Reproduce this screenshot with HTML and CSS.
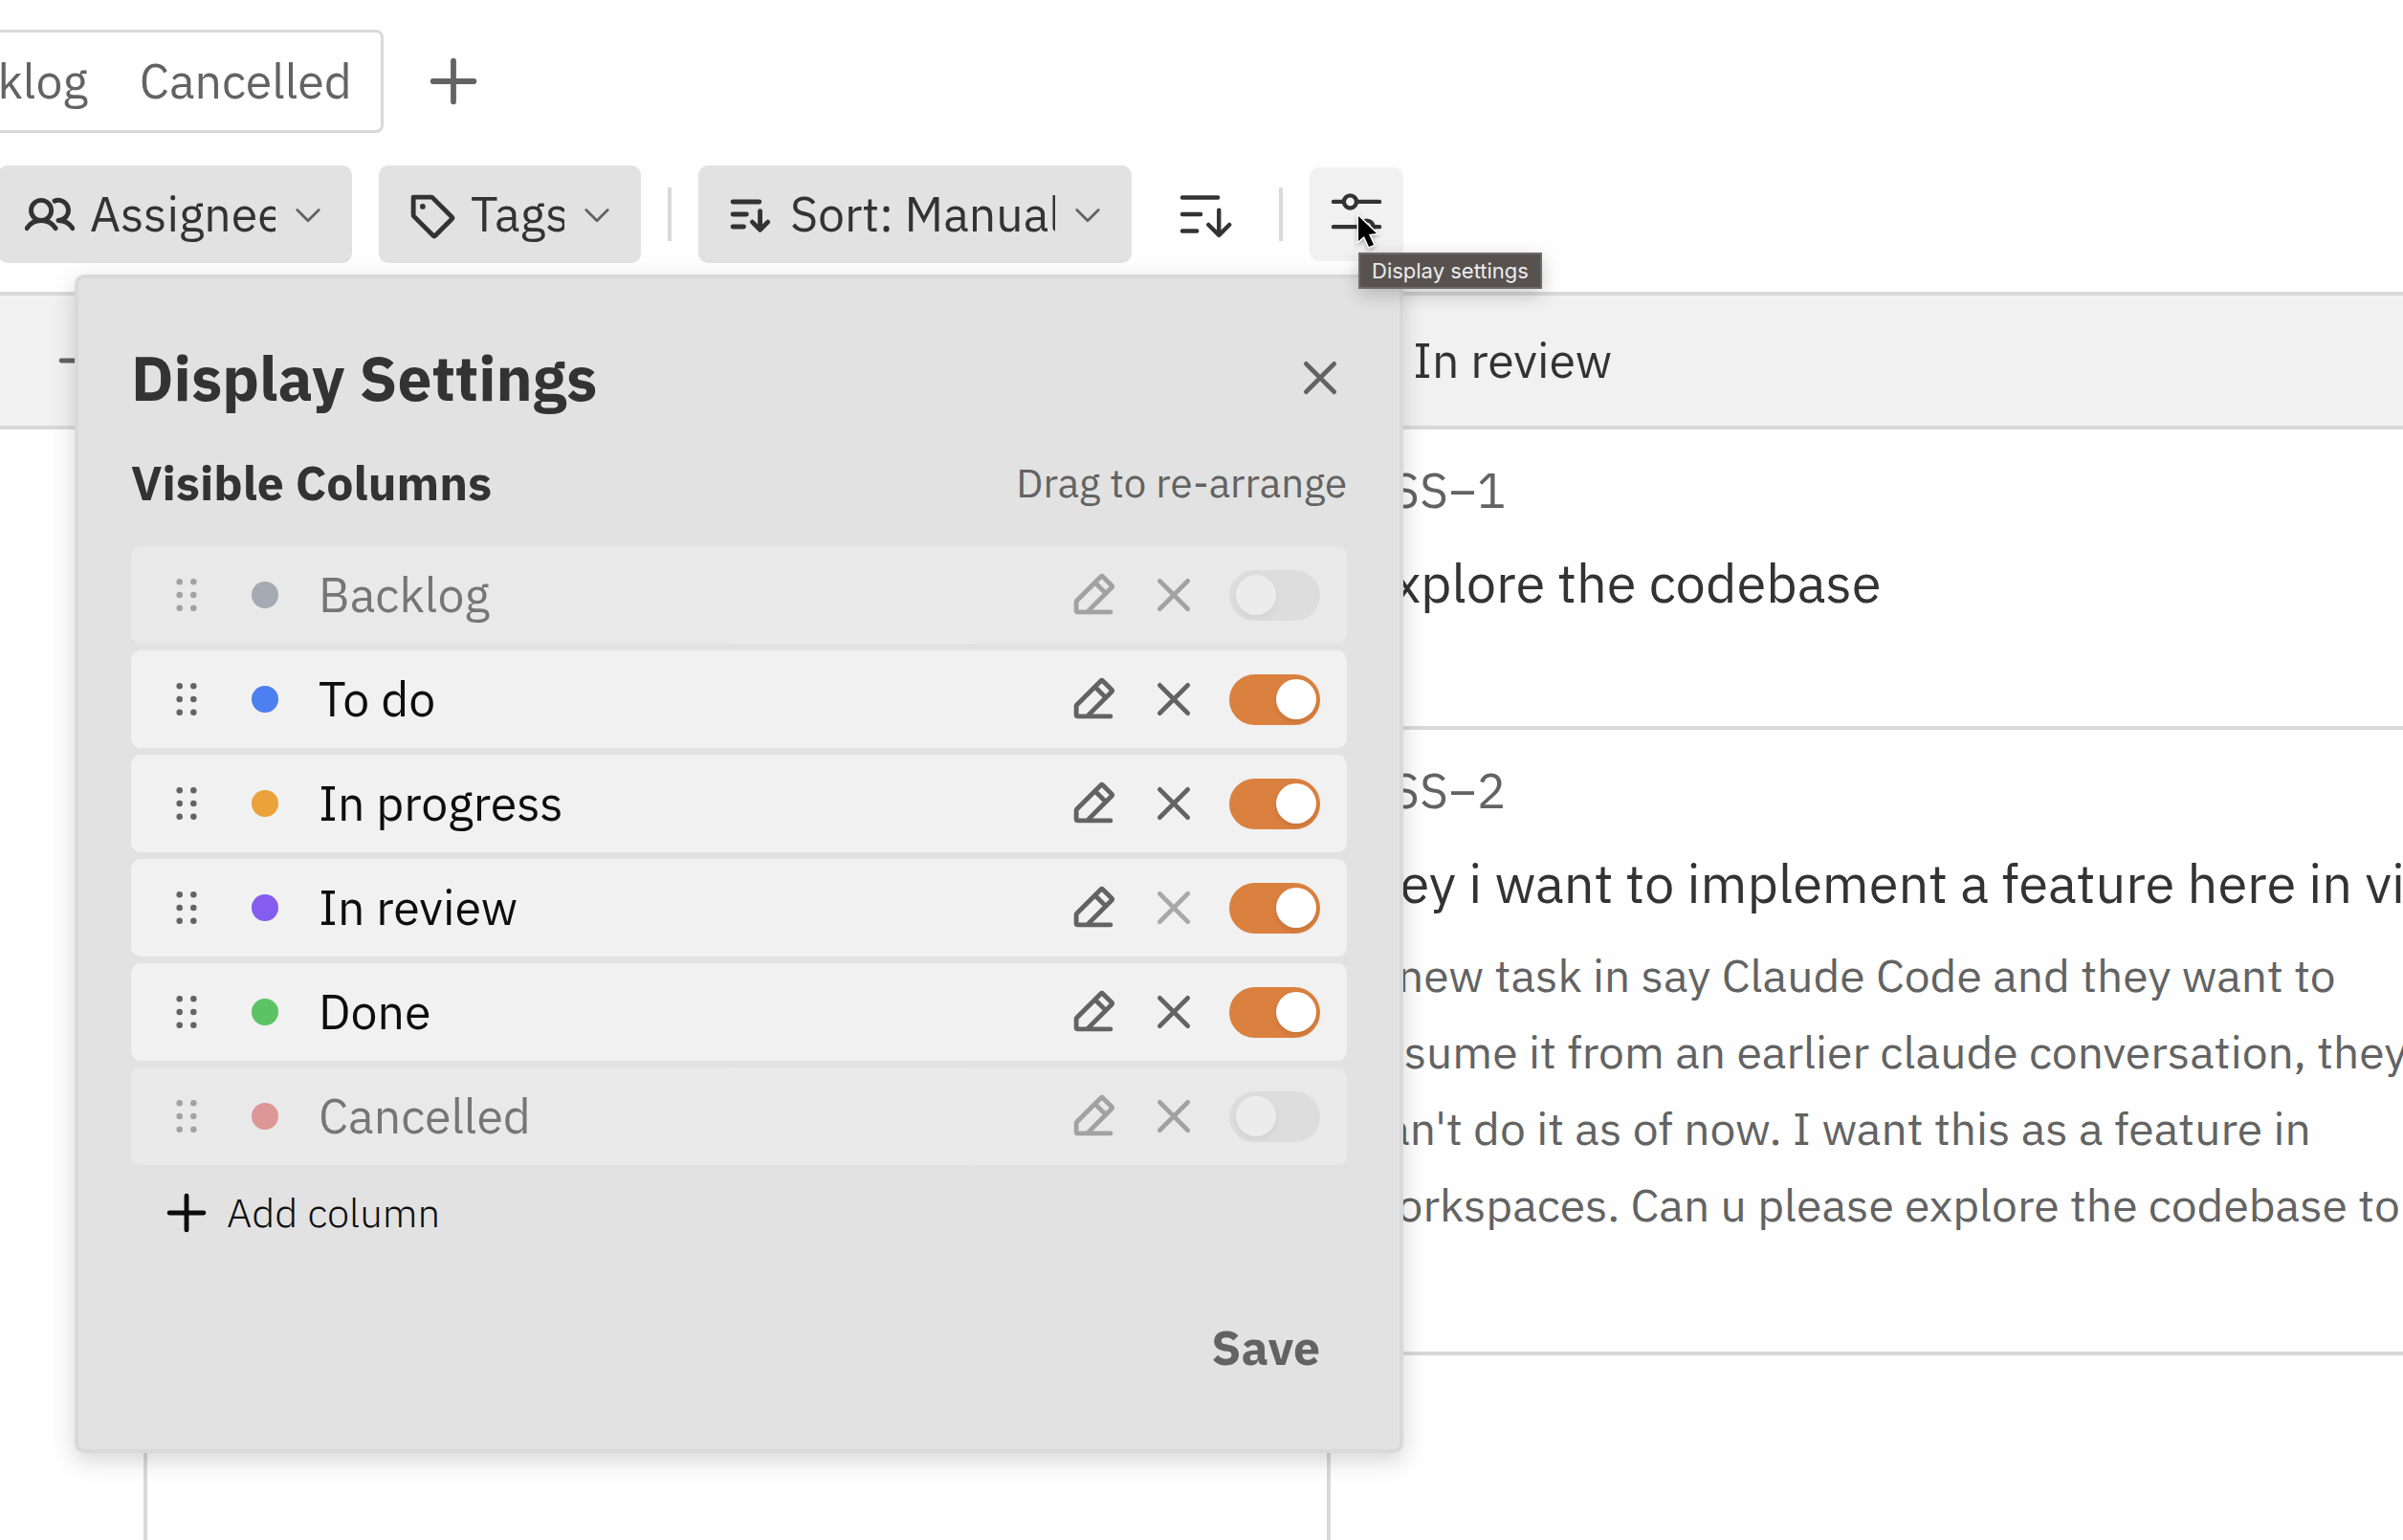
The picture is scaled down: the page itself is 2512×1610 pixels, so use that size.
FILE: index.html
```html
<!DOCTYPE html>
<html lang="en">
<head>
    <meta charset="UTF-8">
    <meta name="viewport" content="width=device-width, initial-scale=1.0">
    <title>Board</title>
    <link rel="stylesheet" href="styles.css">
</head>
<body>
    <!-- icon set -->
    <svg class="sprite" aria-hidden="true">
        <symbol id="plus" viewBox="0 0 256 256"><path d="M40 128H216M128 40V216"/></symbol>
        <symbol id="x" viewBox="0 0 256 256"><path d="M200 56L56 200M200 200L56 56"/></symbol>
        <symbol id="caret" viewBox="0 0 256 256"><path d="M208 96L128 176L48 96"/></symbol>
        <symbol id="users" viewBox="0 0 256 256">
            <circle cx="84" cy="108" r="52"/>
            <path d="M10.23 200a88 88 0 0 1 147.54 0M172 160a87.93 87.93 0 0 1 73.77 40M152.69 59.7A52 52 0 1 1 172 160"/>
        </symbol>
        <symbol id="tag" viewBox="0 0 256 256">
            <path d="M42.34 138.34A8 8 0 0 1 40 132.69V40h92.69a8 8 0 0 1 5.65 2.34l99.32 99.32a8 8 0 0 1 0 11.31L153 237.66a8 8 0 0 1-11.31 0Z"/>
            <circle cx="88" cy="88" r="14" fill="currentColor" stroke="none"/>
        </symbol>
        <symbol id="sort" viewBox="0 0 256 256"><path d="M40 64H176M40 128H110M40 192H96M140 168L180 208L220 168M180 112V208"/></symbol>
        <symbol id="sliders" viewBox="0 0 256 256">
            <path d="M40 80H80M128 80H216M40 176H144M192 176H216"/>
            <circle cx="104" cy="80" r="24"/>
            <circle cx="168" cy="176" r="24"/>
        </symbol>
        <symbol id="pencil" viewBox="0 0 256 256">
            <path d="M96 216H48a8 8 0 0 1-8-8V163.31a8 8 0 0 1 2.34-5.65L165.66 34.34a8 8 0 0 1 11.31 0L221.66 79a8 8 0 0 1 0 11.31ZM216 216H96M136 64L192 120"/>
        </symbol>
        <symbol id="dots" viewBox="0 0 256 256">
            <g fill="currentColor" stroke="none">
                <circle cx="92" cy="60" r="16"/><circle cx="164" cy="60" r="16"/>
                <circle cx="92" cy="128" r="16"/><circle cx="164" cy="128" r="16"/>
                <circle cx="92" cy="196" r="16"/><circle cx="164" cy="196" r="16"/>
            </g>
        </symbol>
    </svg>

    <nav class="views">
        <div class="tabs">
            <a href="#backlog">Backlog</a>
            <a href="#cancelled">Cancelled</a>
        </div>
        <button class="add-view" aria-label="Add view"><svg class="icon large"><use href="#plus"/></svg></button>
    </nav>

    <div class="toolbar">
        <div class="filter assignee">
            <svg class="icon"><use href="#users"/></svg>
            <select aria-label="Assignee"><option>Assignee</option></select>
            <svg class="icon caret"><use href="#caret"/></svg>
        </div>
        <div class="filter tags">
            <svg class="icon"><use href="#tag"/></svg>
            <select aria-label="Tags"><option>Tags</option></select>
            <svg class="icon caret"><use href="#caret"/></svg>
        </div>
        <span class="divider"></span>
        <div class="filter sort">
            <svg class="icon"><use href="#sort"/></svg>
            <select aria-label="Sort"><option>Sort: Manual</option></select>
            <svg class="icon caret"><use href="#caret"/></svg>
        </div>
        <button class="tool" aria-label="Sort direction"><svg class="icon thin"><use href="#sort"/></svg></button>
        <span class="divider"></span>

        <div class="display">
            <button class="tool active" aria-label="Display settings"><svg class="icon thin"><use href="#sliders"/></svg></button>

            <section class="panel">
                <header class="panel-head">
                    <h1>Display Settings</h1>
                    <button class="close" aria-label="Close"><svg class="icon"><use href="#x"/></svg></button>
                </header>
                <div class="panel-sub">
                    <h2>Visible Columns</h2>
                    <span>Drag to re-arrange</span>
                </div>
                <ul class="columns">
                    <li class="off">
                        <svg class="icon"><use href="#dots"/></svg>
                        <span class="dot gray"></span>
                        <label for="c1">Backlog</label>
                        <button aria-label="Edit"><svg class="icon"><use href="#pencil"/></svg></button>
                        <button aria-label="Delete"><svg class="icon"><use href="#x"/></svg></button>
                        <input type="checkbox" id="c1">
                    </li>
                    <li>
                        <svg class="icon"><use href="#dots"/></svg>
                        <span class="dot blue"></span>
                        <label for="c2">To do</label>
                        <button aria-label="Edit"><svg class="icon"><use href="#pencil"/></svg></button>
                        <button aria-label="Delete"><svg class="icon"><use href="#x"/></svg></button>
                        <input type="checkbox" id="c2" checked>
                    </li>
                    <li>
                        <svg class="icon"><use href="#dots"/></svg>
                        <span class="dot amber"></span>
                        <label for="c3">In progress</label>
                        <button aria-label="Edit"><svg class="icon"><use href="#pencil"/></svg></button>
                        <button aria-label="Delete"><svg class="icon"><use href="#x"/></svg></button>
                        <input type="checkbox" id="c3" checked>
                    </li>
                    <li>
                        <svg class="icon"><use href="#dots"/></svg>
                        <span class="dot violet"></span>
                        <label for="c4">In review</label>
                        <button aria-label="Edit"><svg class="icon"><use href="#pencil"/></svg></button>
                        <button aria-label="Delete" disabled><svg class="icon"><use href="#x"/></svg></button>
                        <input type="checkbox" id="c4" checked>
                    </li>
                    <li>
                        <svg class="icon"><use href="#dots"/></svg>
                        <span class="dot green"></span>
                        <label for="c5">Done</label>
                        <button aria-label="Edit"><svg class="icon"><use href="#pencil"/></svg></button>
                        <button aria-label="Delete"><svg class="icon"><use href="#x"/></svg></button>
                        <input type="checkbox" id="c5" checked>
                    </li>
                    <li class="off">
                        <svg class="icon"><use href="#dots"/></svg>
                        <span class="dot red"></span>
                        <label for="c6">Cancelled</label>
                        <button aria-label="Edit"><svg class="icon"><use href="#pencil"/></svg></button>
                        <button aria-label="Delete"><svg class="icon"><use href="#x"/></svg></button>
                        <input type="checkbox" id="c6">
                    </li>
                </ul>
                <button class="add-column"><svg class="icon"><use href="#plus"/></svg>Add column</button>
                <footer><button class="save">Save</button></footer>
            </section>

            <span class="tooltip" role="tooltip">Display settings</span>
            <svg class="cursor" viewBox="0 0 26 40"><path d="M3 3V29L9 24L14 35L19 33L14 22L22 21Z"/></svg>
        </div>
    </div>

    <main class="board">
        <section class="column">
            <header><button aria-label="Add task"><svg class="icon"><use href="#plus"/></svg></button></header>
        </section>
        <section class="column">
            <header></header>
        </section>
        <section class="column">
            <header><span class="dot violet"></span>In review</header>
            <article class="card">
                <p class="id">VSS–1</p>
                <h3>Explore the codebase</h3>
            </article>
            <article class="card">
                <p class="id">VSS–2</p>
                <h3>Hey i want to implement a feature here in vibe</h3>
                <p class="text">a new task in say Claude Code and they want to<br>
                resume it from an earlier claude conversation, they<br>
                can't do it as of now. I want this as a feature in<br>
                workspaces. Can u please explore the codebase to</p>
            </article>
        </section>
    </main>
</body>
</html>
```

FILE: styles.css
```css
* {
    box-sizing: border-box;
    margin: 0;
    padding: 0;
}

body {
    display: flex;
    flex-direction: column;
    min-height: 100vh;
    overflow: hidden;
    background: #fefefe;
    color: #333;
    font-family: "IBM Plex Sans", Roboto, sans-serif;
    font-size: 50px;
    line-height: 60px;
}

button, select {
    border: none;
    background: none;
    color: inherit;
    font: inherit;
}

button {
    display: flex;
    align-items: center;
}

.sprite {
    display: none;
}

.icon {
    flex: none;
    width: 52px;
    height: 52px;
    fill: none;
    stroke: currentColor;
    stroke-width: 24;
    stroke-linecap: round;
    stroke-linejoin: round;
    overflow: visible;
}

.icon.large {
    width: 62px;
    height: 62px;
}

.icon.thin {
    width: 70px;
    height: 70px;
    stroke-width: 16;
}

.icon.caret {
    width: 36px;
    height: 36px;
    stroke-width: 20;
    color: #636363;
}

.dot {
    flex: none;
    width: 28px;
    height: 28px;
    border-radius: 50%;
}

.gray { background: #6b7385; }
.blue { background: #4c7ff0; }
.amber { background: #eba23a; }
.violet { background: #855cf0; }
.green { background: #5cc264; }
.red { background: #d94f4c; }

/* view tabs */
.views {
    display: flex;
    align-items: center;
    gap: 42px;
    padding-top: 31px;
    color: #636363;
}

.tabs {
    display: flex;
    align-items: center;
    gap: 54px;
    height: 108px;
    margin-left: -120px;
    padding: 0 30px;
    border: 3px solid #d9d9d9;
    border-radius: 8px;
}

.tabs a {
    color: inherit;
    text-decoration: none;
}

/* filters */
.toolbar {
    display: flex;
    align-items: center;
    gap: 28px;
    padding-top: 34px;
    margin-left: -2px;
}

.filter {
    display: flex;
    align-items: center;
    gap: 16px;
    height: 102px;
    padding: 0 28px;
    border-radius: 10px;
    background: #e2e2e2;
}

.filter select {
    flex: 1;
    min-width: 0;
    appearance: none;
}

.assignee { width: 370px; }
.tags { width: 274px; }
.sort { width: 453px; }

.divider {
    width: 4px;
    height: 56px;
    background: #d9d9d9;
}

.tool {
    justify-content: center;
    width: 98px;
    height: 98px;
    border-radius: 10px;
}

.tool.active {
    background: #f1f1f1;
}

.display {
    position: relative;
}

/* display settings */
.panel {
    position: absolute;
    z-index: 1;
    top: calc(100% + 14px);
    right: 0;
    width: 1389px;
    padding: 64px 55px 76px;
    border: 4px solid #d9d9d9;
    border-radius: 10px;
    background: #e2e2e2;
    box-shadow: 0 8px 24px rgba(0, 0, 0, 0.16);
}

.panel-head, .panel-sub {
    display: flex;
    align-items: center;
    justify-content: space-between;
}

h1 {
    font-size: 64px;
    font-weight: 700;
    line-height: 80px;
}

.close {
    justify-content: center;
    width: 56px;
    color: #636363;
}

.panel-sub {
    margin: 40px 0 36px;
}

h2 {
    font-size: 50px;
    font-weight: 700;
}

.panel-sub span {
    color: #636363;
    font-size: 42px;
}

.columns {
    display: flex;
    flex-direction: column;
    gap: 7px;
    list-style: none;
}

.columns li {
    display: flex;
    align-items: center;
    gap: 32px;
    height: 102px;
    padding: 0 28px 0 32px;
    border-radius: 10px;
    background: #f1f1f1;
    color: #636363;
}

.columns .dot {
    margin: 0 10px;
}

.columns label {
    flex: 1;
    color: #0d0d0d;
}

.columns button:disabled {
    opacity: 0.5;
}

.columns input {
    appearance: none;
    display: flex;
    align-items: center;
    width: 95px;
    height: 53px;
    padding: 0 7px;
    border-radius: 27px;
    background: #d9d9d9;
}

.columns input::before {
    content: "";
    width: 42px;
    height: 42px;
    border-radius: 50%;
    background: #f6f6f6;
    box-shadow: 0 3px 6px rgba(0, 0, 0, 0.1);
}

.columns input:checked {
    justify-content: flex-end;
    padding: 0 4px;
    background: #db8140;
}

.columns input:checked::before {
    background: #fff;
}

.columns .off {
    opacity: 0.5;
}

.add-column {
    gap: 16px;
    margin-top: 20px;
    padding-left: 32px;
    color: #0d0d0d;
    font-size: 42px;
    font-weight: 300;
}

.panel footer {
    display: flex;
    justify-content: flex-end;
    margin-top: 81px;
    padding-right: 28px;
}

.save {
    color: #636363;
    font-weight: 700;
}

.tooltip {
    position: absolute;
    z-index: 2;
    top: 89px;
    left: 51px;
    padding: 0 12px;
    border: 2px solid #6f6b6a;
    background: #575250;
    box-shadow: 0 6px 20px rgba(0, 0, 0, 0.2);
    color: #ececec;
    font: 22px/34px Inter, sans-serif;
    white-space: nowrap;
}

.cursor {
    position: absolute;
    z-index: 3;
    top: 48px;
    left: 48px;
    width: 26px;
    height: 40px;
    stroke: #fff;
    stroke-width: 3;
    paint-order: stroke;
    filter: drop-shadow(0 2px 2px rgba(0, 0, 0, 0.3));
}

/* board */
.board {
    flex: 1;
    display: grid;
    grid-template-columns: 154px 1237px 1fr;
    margin-top: 30px;
}

.column {
    min-width: 0;
    border-right: 4px solid #d9d9d9;
}

.column:last-child {
    border-right: none;
}

.column header {
    display: flex;
    align-items: center;
    gap: 22px;
    height: 144px;
    padding: 0 36px;
    border: solid #d9d9d9;
    border-width: 4px 0;
    background: #f1f1f1;
}

.column:first-child header {
    padding-left: 56px;
    color: #636363;
}

.card {
    padding: 34px 33px 114px;
    border-bottom: 4px solid #d9d9d9;
    white-space: nowrap;
}

.id {
    color: #636363;
    font-family: "IBM Plex Mono", "Liberation Mono", monospace;
}

.card h3 {
    margin-top: 30px;
    font-size: 56px;
    font-weight: 400;
    line-height: 72px;
}

.text {
    margin-top: 20px;
    color: #636363;
    font-size: 48px;
    line-height: 80px;
}
```
